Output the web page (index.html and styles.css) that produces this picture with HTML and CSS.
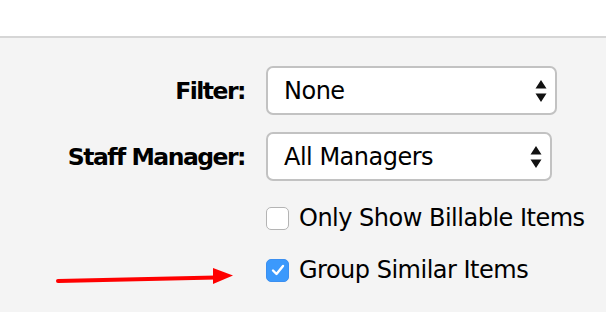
FILE: index.html
```html
<!DOCTYPE html>
<html>
<head>
<meta charset="utf-8">
<link rel="stylesheet" href="styles.css">
</head>
<body>
<div class="top"></div>
<div class="panel">
  <div class="form">
    <div class="label">Filter:</div>
    <div class="select sel-filter">
      <span>None</span>
      <svg class="arrows" width="12" height="22" viewBox="0 0 12 22"><path d="M6 0 L11.5 8.5 L0.5 8.5 Z M6 22 L11.5 13.5 L0.5 13.5 Z" fill="#111"/></svg>
    </div>
    <div class="label">Staff Manager:</div>
    <div class="select sel-staff">
      <span>All Managers</span>
      <svg class="arrows" width="12" height="22" viewBox="0 0 12 22"><path d="M6 0 L11.5 8.5 L0.5 8.5 Z M6 22 L11.5 13.5 L0.5 13.5 Z" fill="#111"/></svg>
    </div>
    <div></div>
    <label class="check row-billable"><span class="box"></span><span>Only Show Billable Items</span></label>
    <div></div>
    <label class="check row-group"><span class="box checked"><svg width="14" height="12" viewBox="0 0 14 12"><path d="M2 6.5 L5.5 10 L12 2" fill="none" stroke="#fff" stroke-width="2.4" stroke-linecap="round" stroke-linejoin="round"/></svg></span><span>Group Similar Items</span></label>
  </div>
  <svg class="arrow" width="240" height="30" viewBox="0 0 240 30"><path d="M58 16 L216 12.5" stroke="#ff0000" stroke-width="4" stroke-linecap="round"/><path d="M213 3 L233 10.5 L213 19 Z" fill="#ff0000"/></svg>
</div>
</body>
</html>
```
FILE: styles.css
```css
html, body {
  margin: 0;
  padding: 0;
}
body {
  width: 606px;
  height: 312px;
  overflow: hidden;
  background: #f4f4f4;
  font-family: "DejaVu Sans", Verdana, sans-serif;
  color: #000;
}
.top {
  height: 36px;
  background: #fff;
  border-bottom: 2px solid #d6d6d6;
}
.panel {
  position: relative;
  height: 274px;
}
.form {
  display: grid;
  grid-template-columns: 245px auto;
  column-gap: 21px;
  row-gap: 17px;
  padding-top: 28px;
  align-items: center;
  justify-content: start;
}
.label {
  text-align: right;
  font-weight: bold;
  font-size: 23.5px;
  letter-spacing: -1.5px;
}
.select {
  box-sizing: border-box;
  height: 49px;
  background: #fff;
  border: 2px solid #c2c2c2;
  border-radius: 7px;
  display: flex;
  align-items: center;
  justify-content: space-between;
  padding: 0 8px 0 16px;
  font-size: 24px;
  letter-spacing: -0.5px;
}
.sel-filter { width: 291px; }
.sel-staff { width: 286px; }
.arrows { display: block; }
.check {
  display: flex;
  align-items: center;
  gap: 10px;
  font-size: 24px;
  letter-spacing: -0.5px;
}
.row-billable { margin-top: 6px; }
.row-group { margin-top: 7px; }
.box {
  box-sizing: border-box;
  width: 23px;
  height: 23px;
  border: 1.5px solid #b4b4b4;
  border-radius: 5px;
  background: #fff;
  display: flex;
  align-items: center;
  justify-content: center;
}
.box.checked {
  background: #3b99fc;
  border-color: #3b8ff0;
}
.arrow {
  position: absolute;
  left: 0;
  top: 227px;
}
```
